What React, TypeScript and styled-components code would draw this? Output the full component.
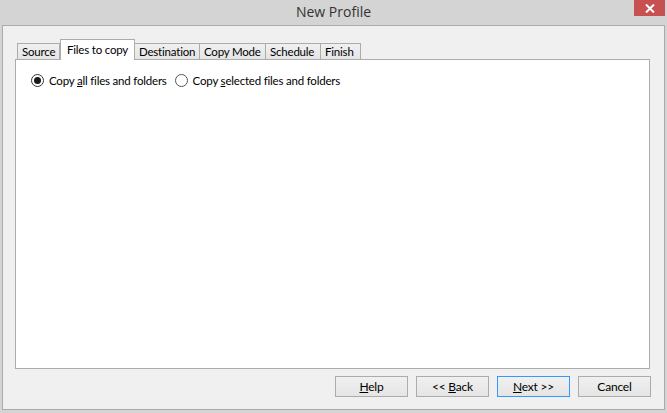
import React from "react";
import styled, { createGlobalStyle } from "styled-components";

const Global = createGlobalStyle`
  html, body { margin: 0; padding: 0; }
  body {
    background: #d4d4d4;
    font-family: Lato, "Liberation Sans", Arial, sans-serif;
    font-size: 11.5px;
    letter-spacing: -0.2px;
    color: #000;
  }
`;

const Window = styled.div`
  width: 667px;
  height: 413px;
  background: #d4d4d4;
  display: flex;
  flex-direction: column;
  box-sizing: border-box;
`;

const TitleBar = styled.div`
  position: relative;
  height: 25px;
  display: flex;
  align-items: center;
  justify-content: center;
`;

const Title = styled.div`
  font-family: "Open Sans", "Noto Sans", sans-serif;
  font-size: 14px;
  letter-spacing: 0;
  color: #333;
  margin-top: -3px;
`;

const CloseButton = styled.div`
  position: absolute;
  top: 0;
  right: 2px;
  width: 31px;
  height: 16px;
  background: #c75050;
  display: flex;
  align-items: center;
  justify-content: center;
`;

const Client = styled.div`
  flex: 1;
  margin: 0 2px 3px 2px;
  border: 1px solid #aaaaaa;
  background: #f0f0f0;
  display: flex;
  flex-direction: column;
  padding: 13px 14px 12px 12px;
  box-sizing: border-box;
`;

const TabStrip = styled.div`
  display: flex;
  align-items: flex-end;
  height: 21px;
  padding-left: 2px;
  position: relative;
  z-index: 1;
  margin-bottom: -1px;
`;

const Tab = styled.div<{ $w: number; $active?: boolean }>`
  width: ${(p) => p.$w}px;
  box-sizing: border-box;
  height: ${(p) => (p.$active ? 21 : 17)}px;
  position: relative;
  z-index: ${(p) => (p.$active ? 2 : 1)};
  border: 1px solid #acacac;
  border-left-width: ${(p) => (p.$active ? 1 : 0)}px;
  border-bottom: ${(p) => (p.$active ? "none" : "1px solid #acacac")};
  background: ${(p) =>
    p.$active ? "#ffffff" : "linear-gradient(#f0f0f0, #e5e5e5)"};
  display: flex;
  align-items: ${(p) => (p.$active ? "flex-start" : "center")};
  padding: ${(p) => (p.$active ? "3px 0 0 6px" : "0 0 0 4px")};
  white-space: nowrap;
  &:first-child {
    border-left-width: 1px;
  }
`;

const Panel = styled.div`
  flex: 1;
  background: #fff;
  border: 1px solid #acacac;
  padding: 14px 15px;
  box-sizing: border-box;
`;

const RadioRow = styled.div`
  display: flex;
  align-items: center;
  gap: 8px;
`;

const RadioLabel = styled.label`
  display: flex;
  align-items: center;
  gap: 5px;
  white-space: nowrap;
`;

const RadioCircle = styled.span<{ $checked?: boolean }>`
  width: 13px;
  height: 13px;
  box-sizing: border-box;
  border-radius: 50%;
  border: 1px solid ${(p) => (p.$checked ? "#333" : "#555")};
  background: #fff;
  display: flex;
  align-items: center;
  justify-content: center;
  &::after {
    content: "";
    display: ${(p) => (p.$checked ? "block" : "none")};
    width: 7px;
    height: 7px;
    border-radius: 50%;
    background: #1a1a1a;
  }
`;

const ButtonRow = styled.div`
  display: flex;
  justify-content: flex-end;
  gap: 8px;
  margin-top: 7px;
  margin-right: -1px;
`;

const Button = styled.div<{ $default?: boolean }>`
  width: 73px;
  height: 21px;
  box-sizing: border-box;
  border: 1px solid ${(p) => (p.$default ? "#3399ff" : "#acacac")};
  background: linear-gradient(#f0f0f0, #e5e5e5);
  display: flex;
  align-items: center;
  justify-content: center;
  font-size: 12px;
`;

const tabs = [
  { label: "Source", w: 43 },
  { label: "Files to copy", w: 75, active: true },
  { label: "Destination", w: 65 },
  { label: "Copy Mode", w: 66 },
  { label: "Schedule", w: 55 },
  { label: "Finish", w: 40 },
];

export default function App() {
  return (
    <>
      <Global />
      <Window>
        <TitleBar>
          <Title>New Profile</Title>
          <CloseButton>
            <svg width="10" height="9" viewBox="0 0 10 9">
              <path d="M1 0.5 L9 8.5 M9 0.5 L1 8.5" stroke="#fff" strokeWidth="2" />
            </svg>
          </CloseButton>
        </TitleBar>
        <Client>
          <TabStrip>
            {tabs.map((t) => (
              <Tab key={t.label} $w={t.w} $active={t.active}>
                {t.label}
              </Tab>
            ))}
          </TabStrip>
          <Panel>
            <RadioRow>
              <RadioLabel>
                <RadioCircle $checked />
                <span>
                  Copy <u>a</u>ll files and folders
                </span>
              </RadioLabel>
              <RadioLabel>
                <RadioCircle />
                <span>
                  Copy <u>s</u>elected files and folders
                </span>
              </RadioLabel>
            </RadioRow>
          </Panel>
          <ButtonRow>
            <Button>
              <span>
                <u>H</u>elp
              </span>
            </Button>
            <Button>
              <span>
                &lt;&lt; <u>B</u>ack
              </span>
            </Button>
            <Button $default>
              <span>
                <u>N</u>ext &gt;&gt;
              </span>
            </Button>
            <Button>Cancel</Button>
          </ButtonRow>
        </Client>
      </Window>
    </>
  );
}
